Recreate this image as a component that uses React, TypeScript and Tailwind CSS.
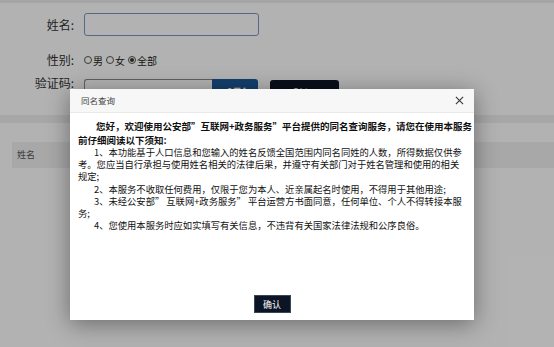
import React from 'react';

const font = "font-['Noto_Sans_CJK_SC','Microsoft_YaHei','Liberation_Sans',sans-serif]";

const Radio: React.FC<{ checked?: boolean; label: string }> = ({ checked, label }) => (
  <span className="flex items-center">
    <span className="w-[8px] h-[8px] rounded-full border border-[#555] flex items-center justify-center mr-[1px]">
      {checked && <span className="w-[4px] h-[4px] rounded-full bg-[#333]" />}
    </span>
    <span>{label}</span>
  </span>
);

export default function App() {
  return (
    <div className={`relative w-[554px] h-[347px] overflow-hidden bg-white ${font}`}>
      {/* page under the dialog */}
      <div className="h-[3px] bg-[#ededed]" />
      <div className="h-[112px] pt-[10px] text-[#333]">
        <div className="flex items-center h-[23px]">
          <span className="w-[74px] text-right text-[12px]">姓名:</span>
          <div className="ml-[10px] w-[175px] h-[23px] border border-[#7f97c2] rounded-[3px] bg-white" />
        </div>
        <div className="flex items-center h-[24px] mt-[12px]">
          <span className="w-[74px] text-right text-[12px]">性别:</span>
          <div className="ml-[10px] flex items-center gap-[3px] text-[10px] text-[#222]">
            <Radio label="男" />
            <Radio label="女" />
            <Radio label="全部" checked />
          </div>
        </div>
        <div className="flex items-start">
          <span className="w-[74px] text-right text-[12px] leading-[22px]">验证码:</span>
          <div className="ml-[10px] mt-[7px] flex">
            <div className="w-[128px] h-[26px] border border-[#8a8a8a] border-r-0 rounded-l-[3px] bg-white" />
            <div className="w-[46px] h-[26px] bg-[#1c5b9b] rounded-r-[3px] text-white text-[14px] font-bold leading-[26px] pl-[10px] italic">
              4FJ
            </div>
          </div>
          <button className="ml-[12px] mt-[8px] w-[69px] h-[26px] bg-[#0e1726] rounded-[3px] text-white text-[11px]">
            验证
          </button>
        </div>
      </div>
      <div className="h-[8px] bg-[#efefef]" />
      <div className="mt-[19px] ml-[12px] h-[26px] bg-[#f1f1f1] flex items-center pl-[5px] text-[9px] text-[#555]">
        姓名
      </div>

      {/* overlay */}
      <div className="absolute inset-0 bg-black/30" />

      {/* dialog */}
      <div className="absolute left-[70px] top-[89px] w-[404px] h-[231px] bg-white flex flex-col shadow-[0_4px_22px_rgba(0,0,0,0.4)]">
        <div className="h-[24px] bg-[#f7f7f7] border-b border-[#e8e8e8] flex items-center justify-between pl-[11px] pr-[10px]">
          <span className="text-[8.5px] text-[#444]">同名查询</span>
          <svg width="9" height="9" viewBox="0 0 10 10" className="text-[#333]">
            <path d="M1 1L9 9M9 1L1 9" stroke="currentColor" strokeWidth="1.2" />
          </svg>
        </div>
        <div className="flex-1 pl-[8px] pt-[7px] text-[9.3px] text-[#111] whitespace-nowrap">
          <p className="font-bold text-[9.5px] leading-[13.5px] indent-[18px]">
            您好，欢迎使用公安部”互联网+政务服务”平台提供的同名查询服务，请您在使用本服务
            <br />
            前仔细阅读以下须知:
          </p>
          <div className="leading-[12.2px] mt-[-1px]">
            <p className="indent-[16px]">
              1、本功能基于人口信息和您输入的姓名反馈全国范围内同名同姓的人数，所得数据仅供参
              <br />
              考。您应当自行承担与使用姓名相关的法律后果，并遵守有关部门对于姓名管理和使用的相关
              <br />
              规定;
            </p>
            <p className="indent-[16px]">2、本服务不收取任何费用，仅限于您为本人、近亲属起名时使用，不得用于其他用途;</p>
            <p className="indent-[16px]">
              3、未经公安部” 互联网+政务服务” 平台运营方书面同意，任何单位、个人不得转接本服
              <br />
              务;
            </p>
            <p className="indent-[16px]">4、您使用本服务时应如实填写有关信息，不违背有关国家法律法规和公序良俗。</p>
          </div>
        </div>
        <div className="flex justify-center pb-[7px]">
          <button className="w-[37px] h-[18px] bg-[#0b1526] border border-[#3c4656] text-white text-[9px] leading-none">
            确认
          </button>
        </div>
      </div>
    </div>
  );
}
